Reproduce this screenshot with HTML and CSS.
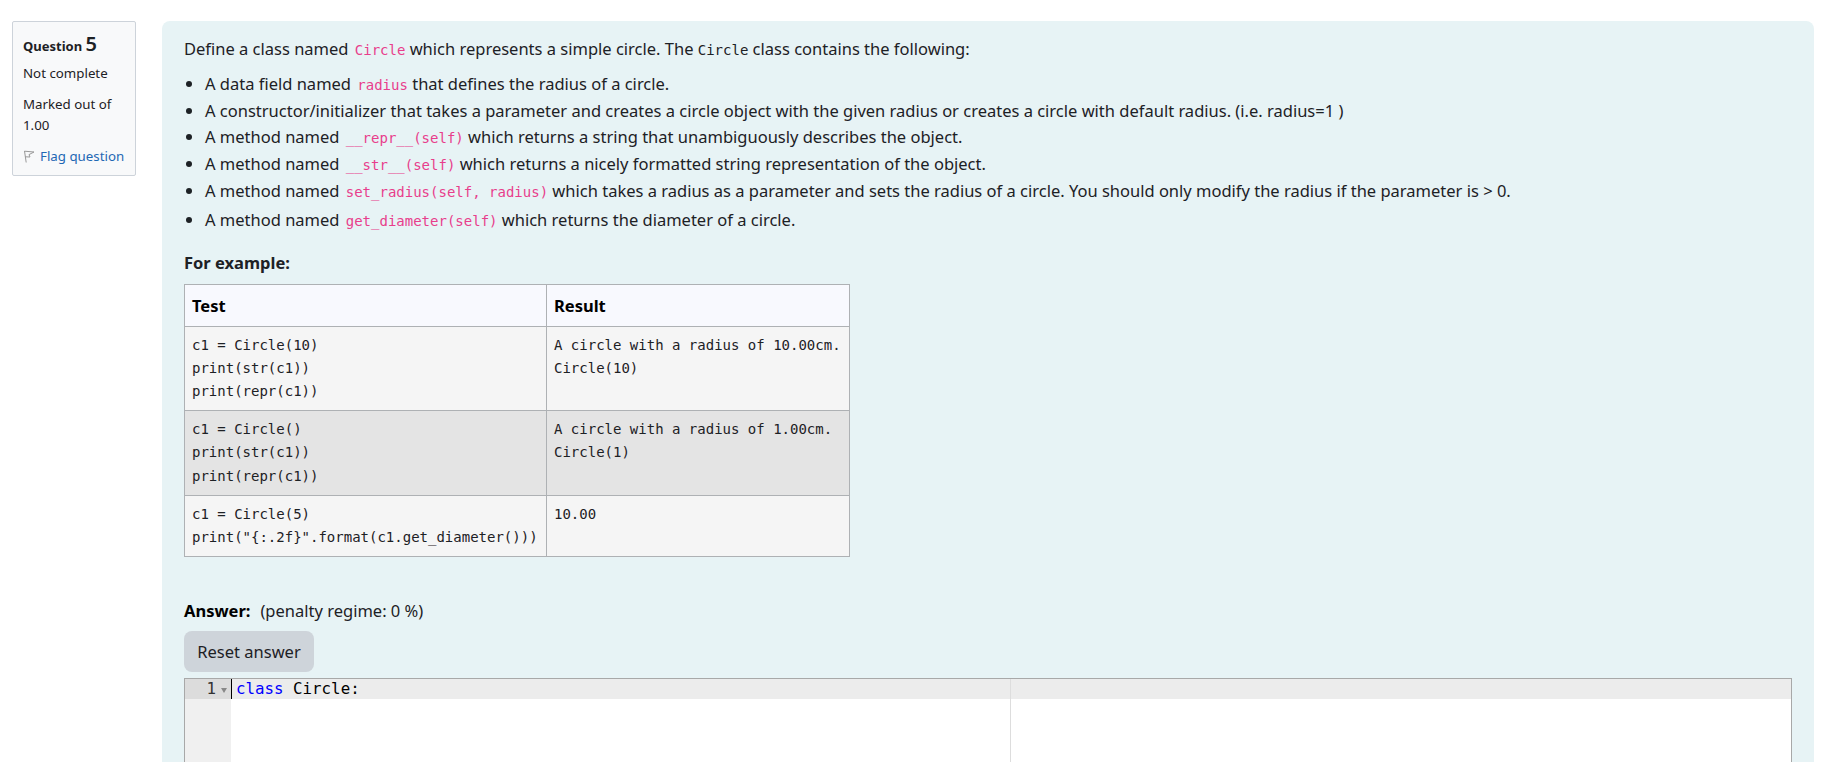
FILE: index.html
```html
<!DOCTYPE html>
<html lang="en">
<head>
    <meta charset="UTF-8">
    <title>Question 5</title>
    <link rel="stylesheet" href="styles.css">
</head>
<body>
    <div class="que">
        <div class="info">
            <h3 class="qno">Question <span class="qnum">5</span></h3>
            <div class="state">Not complete</div>
            <div class="grade">Marked out of 1.00</div>
            <div class="flag">
                <svg class="flag-icon" width="12" height="13" viewBox="0 0 12 13">
                    <path d="M1.5 1 L3.2 12.5 M1.5 1.2 L11 2 L6 4.6 L7 7 L2.2 6.8" fill="none" stroke="#999" stroke-width="1"/>
                </svg>
                <a href="#">Flag question</a>
            </div>
        </div>
        <div class="content">
            <p class="intro">Define a class named <code>Circle</code> which represents a simple circle. The <tt>Circle</tt> class contains the following:</p>
            <ul class="spec">
                <li>A data field named <code>radius</code> that defines the radius of a circle.</li>
                <li>A constructor/initializer that takes a parameter and creates a circle object with the given radius or creates a circle with default radius. (i.e. radius=1 )</li>
                <li>A method named <code>__repr__(self)</code> which returns a string that unambiguously describes the object.</li>
                <li>A method named <code>__str__(self)</code> which returns a nicely formatted string representation of the object.</li>
                <li>A method named <code>set_radius(self, radius)</code> which takes a radius as a parameter and sets the radius of a circle. You should only modify the radius if the parameter is &gt; 0.</li>
                <li class="last">A method named <code>get_diameter(self)</code> which returns the diameter of a circle.</li>
            </ul>
            <h5 class="for-example">For example:</h5>
            <table class="examples">
                <tr class="head">
                    <th class="col-test">Test</th>
                    <th>Result</th>
                </tr>
                <tr class="r0">
                    <td><pre>c1 = Circle(10)
print(str(c1))
print(repr(c1))</pre></td>
                    <td><pre>A circle with a radius of 10.00cm.
Circle(10)</pre></td>
                </tr>
                <tr class="r1">
                    <td><pre>c1 = Circle()
print(str(c1))
print(repr(c1))</pre></td>
                    <td><pre>A circle with a radius of 1.00cm.
Circle(1)</pre></td>
                </tr>
                <tr class="r0">
                    <td><pre>c1 = Circle(5)
print("{:.2f}".format(c1.get_diameter()))</pre></td>
                    <td><pre>10.00</pre></td>
                </tr>
            </table>
            <div class="prompt"><b>Answer:</b><span class="penalty">(penalty regime: 0 %)</span></div>
            <button class="reset">Reset answer</button>
            <div class="editor">
                <div class="gutter">
                    <div class="gutter-active">1<span class="fold"></span></div>
                </div>
                <div class="code">
                    <div class="line-active"><span class="cursor"></span><span class="kw">class</span> Circle:</div>
                </div>
                <div class="print-margin"></div>
            </div>
        </div>
    </div>
</body>
</html>
```

FILE: styles.css
```css
html, body {
    height: 100%;
    margin: 0;
    overflow: hidden;
}
body {
    font-family: "Noto Sans", "Open Sans", sans-serif;
    font-size: 16.5px;
    color: #1d2125;
    background-color: #fff;
}
.que {
    display: flex;
    align-items: flex-start;
    gap: 26px;
    padding: 21px 7px 0 12px;
}
.info {
    flex: 0 0 124px;
    box-sizing: border-box;
    height: 155px;
    padding: 11px 9px 0 10px;
    background-color: #f8f9fa;
    border: 1px solid #cdd3da;
    border-radius: 2px;
    font-size: 13.3px;
    line-height: 21px;
}
.qno {
    margin: 0 0 6px;
    font-size: 13px;
    font-weight: 700;
    line-height: 22px;
}
.qnum {
    font-size: 20px;
    font-weight: 600;
}
.state {
    margin-bottom: 10px;
}
.grade {
    margin-bottom: 10px;
}
.flag {
    display: flex;
    align-items: center;
    gap: 5px;
}
.flag a {
    color: #1f68b4;
    text-decoration: none;
}
.content {
    flex: 1;
    height: 900px;
    padding: 14px 22px 0;
    background-color: #e7f3f5;
    border-radius: 8px;
}
.intro {
    margin: 0 0 9px;
    line-height: 27px;
}
code {
    margin-left: 2px;
    font-family: "DejaVu Sans Mono", monospace;
    font-size: 14px;
    line-height: 1;
    color: #e83e8c;
}
tt {
    font-family: "DejaVu Sans Mono", monospace;
    font-size: 14px;
    line-height: 1;
}
.spec {
    margin: 0 0 17px;
    padding-left: 21px;
    line-height: 26.67px;
}
.spec .last {
    margin-top: 2.5px;
}
.for-example {
    margin: 0 0 9px;
    font-size: 16.5px;
    font-weight: 700;
    line-height: 24px;
}
.examples {
    border-collapse: collapse;
    width: 666px;
    margin-bottom: 42px;
}
.examples th, .examples td {
    border: 1px solid #aeb1b4;
    padding: 7px 8px 7px 7px;
    text-align: left;
    vertical-align: top;
}
.examples th {
    height: 29px;
    padding-top: 6px;
    padding-bottom: 6px;
    background-color: #f8f9fe;
    color: #000;
    font-weight: 700;
    line-height: 29px;
}
.col-test {
    width: 346px;
}
.examples .r0 td {
    background-color: #f5f5f5;
}
.examples .r1 td {
    background-color: #e4e4e4;
}
pre {
    margin: 0;
    font-family: "DejaVu Sans Mono", monospace;
    font-size: 14px;
    line-height: 23.2px;
    color: #1d2125;
}
.prompt {
    margin-bottom: 8px;
    line-height: 24px;
}
.prompt b {
    color: #000;
}
.penalty {
    margin-left: 10px;
}
.reset {
    display: block;
    width: 130px;
    height: 41px;
    padding: 0;
    border: 0;
    border-radius: 8px;
    margin-bottom: 6px;
    background-color: #ced4da;
    color: #1d2125;
    font-family: inherit;
    font-size: 16.5px;
}
.editor {
    position: relative;
    display: flex;
    height: 400px;
    border: 1px solid #a8a8a8;
    background-color: #fff;
    font-family: "DejaVu Sans Mono", monospace;
    font-size: 15.8px;
    line-height: 20px;
}
.gutter {
    flex: 0 0 46px;
    background-color: #f0f0f0;
    color: #333;
}
.gutter-active {
    display: flex;
    justify-content: flex-end;
    align-items: center;
    gap: 5px;
    height: 20px;
    padding-right: 4px;
    background-color: #dcdcdc;
}
.fold {
    width: 0;
    height: 0;
    margin-top: 3px;
    border-left: 3px solid transparent;
    border-right: 3px solid transparent;
    border-top: 5px solid #888;
}
.code {
    flex: 1;
    min-width: 0;
}
.line-active {
    height: 20px;
    padding-left: 5px;
    background-color: #ececec;
    color: #000;
    position: relative;
}
.cursor {
    position: absolute;
    left: 0;
    top: 0;
    width: 1px;
    height: 20px;
    background-color: #000;
}
.kw {
    color: #00f;
}
.print-margin {
    position: absolute;
    left: 825px;
    top: 0;
    bottom: 0;
    width: 1px;
    background-color: #ddd;
}
```
